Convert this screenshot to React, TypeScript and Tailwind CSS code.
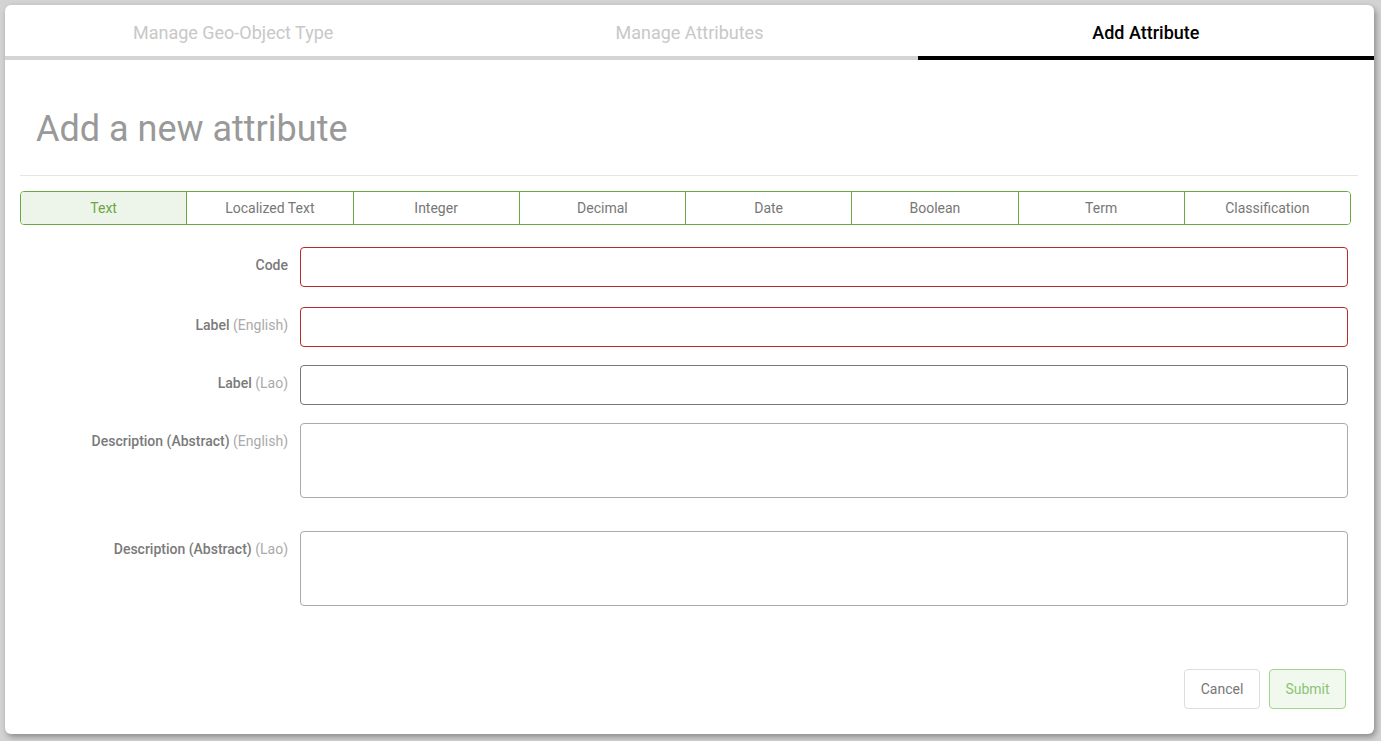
import React from 'react'

const TYPES = ['Text', 'Localized Text', 'Integer', 'Decimal', 'Date', 'Boolean', 'Term', 'Classification']

function FieldLabel({ main, sub }: { main: string; sub?: string }) {
  return (
    <div className="w-[280px] shrink-0 pt-[8px] pr-[12px] text-right text-[14px] leading-[20px]">
      <span className="font-medium text-[#7a7a7a]">{main}</span>
      {sub && <span className="text-[#aaa]"> ({sub})</span>}
    </div>
  )
}

export default function App() {
  const [active, setActive] = React.useState('Text')
  const tabs = ['Manage Geo-Object Type', 'Manage Attributes', 'Add Attribute']

  return (
    <div className="h-[741px] overflow-hidden bg-[#d3d3d3] p-[5px]" style={{ fontFamily: 'Roboto, "Noto Sans", sans-serif' }}>
      <div className="flex h-[729px] w-[1369px] flex-col rounded-[6px] bg-white shadow-[2px_3px_6px_rgba(0,0,0,0.35)]">
        {/* wizard steps */}
        <div className="flex">
          {tabs.map((t, i) => {
            const on = i === tabs.length - 1
            return (
              <div key={t} className={["flex h-[55px] flex-1 items-center justify-center border-b-[4px] pt-[3px] text-[18px]", on ? "border-black font-medium text-black" : "border-[#d4d4d4] text-[#c8c8c8]"].join(' ')}>
                {t}
              </div>
            )
          })}
        </div>

        <div className="flex flex-1 flex-col pl-[15px] pr-[16px]">
          <h1 className="mt-[49px] pl-[16px] text-[36px] leading-[40px] text-[#999]">Add a new attribute</h1>
          <hr className="mt-[26px] border-t border-[#e5e5e5]" />

          {/* attribute type selector */}
          <div className="mt-[15px] flex h-[34px] w-[1331px] overflow-hidden rounded-[4px] border border-[#6aa843]">
            {TYPES.map((t, i) => (
              <button
                key={t}
                onClick={() => setActive(t)}
                className={["flex flex-1 items-center justify-center text-[14px]", i > 0 && "border-l border-[#6aa843]", active === t ? "bg-[#edf5ea] text-[#6aa843]" : "bg-white text-[#777]"].filter(Boolean).join(' ')}
              >
                {t}
              </button>
            ))}
          </div>

          {/* form */}
          <div className="mt-[22px] flex flex-col">
            <div className="flex">
              <FieldLabel main="Code" />
              <input className="h-[40px] w-[1048px] rounded-[4px] border border-[#b52b27] px-3 outline-none" />
            </div>
            <div className="mt-[20px] flex">
              <FieldLabel main="Label" sub="English" />
              <input className="h-[40px] w-[1048px] rounded-[4px] border border-[#b52b27] px-3 outline-none" />
            </div>
            <div className="mt-[18px] flex">
              <FieldLabel main="Label" sub="Lao" />
              <input className="h-[40px] w-[1048px] rounded-[4px] border border-[#777] px-3 outline-none" />
            </div>
            <div className="mt-[18px] flex">
              <FieldLabel main="Description (Abstract)" sub="English" />
              <textarea className="h-[75px] w-[1048px] resize-none rounded-[4px] border border-[#aaa] px-3 outline-none" />
            </div>
            <div className="mt-[33px] flex">
              <FieldLabel main="Description (Abstract)" sub="Lao" />
              <textarea className="h-[75px] w-[1048px] resize-none rounded-[4px] border border-[#aaa] px-3 outline-none" />
            </div>
          </div>

          <div className="mt-auto mb-[25px] flex justify-end gap-[9px] pr-[12px]">
            <button className="h-[40px] w-[76px] rounded-[4px] border border-[#ddd] bg-white text-[14px] text-[#777]">Cancel</button>
            <button className="h-[40px] w-[77px] rounded-[4px] border border-[#a3d38e] bg-[#f1f8ee] text-[14px] text-[#8cc474]">Submit</button>
          </div>
        </div>
      </div>
    </div>
  )
}
